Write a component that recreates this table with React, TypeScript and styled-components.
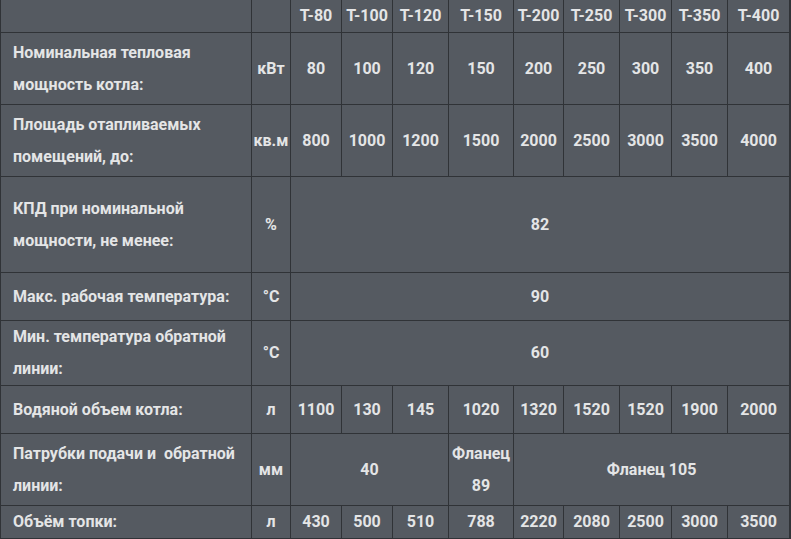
import React from "react";
import styled, { createGlobalStyle } from "styled-components";

const Global = createGlobalStyle`
  html, body {
    margin: 0;
    padding: 0;
    background: #303337;
  }
  body {
    font-family: Roboto, "Noto Sans", "Liberation Sans", sans-serif;
  }
`;

const Grid = styled.div`
  display: grid;
  width: 790px;
  box-sizing: border-box;
  padding: 0 1px 1px 1px;
  gap: 1px;
  background: #303337;
  grid-template-columns: 250px 38px 50px 50px 55px 64px 49px 55px 51px 55px 61px;
  grid-template-rows: 32px 71px 71px 95px 47px 64px 47px 71px 32px;
`;

const Cell = styled.div<{ $span?: number }>`
  background: #555a61;
  color: #e4e5e6;
  font-weight: 700;
  font-size: 16px;
  line-height: 32px;
  display: flex;
  align-items: center;
  justify-content: center;
  text-align: center;
  grid-column: span ${(p) => p.$span ?? 1};
  overflow: hidden;
  white-space: nowrap;
`;

const Label = styled(Cell)`
  justify-content: flex-start;
  text-align: left;
  padding-left: 12px;
`;

const models = ["T-80", "T-100", "T-120", "T-150", "T-200", "T-250", "T-300", "T-350", "T-400"];

type Row = {
  label: React.ReactNode;
  unit: string;
  values: { text: React.ReactNode; span?: number }[];
};

const rows: Row[] = [
  {
    label: (
      <>
        Номинальная тепловая
        <br />
        мощность котла:
      </>
    ),
    unit: "кВт",
    values: ["80", "100", "120", "150", "200", "250", "300", "350", "400"].map((t) => ({ text: t })),
  },
  {
    label: (
      <>
        Площадь отапливаемых
        <br />
        помещений, до:
      </>
    ),
    unit: "кв.м",
    values: ["800", "1000", "1200", "1500", "2000", "2500", "3000", "3500", "4000"].map((t) => ({ text: t })),
  },
  {
    label: (
      <>
        КПД при номинальной
        <br />
        мощности, не менее:
      </>
    ),
    unit: "%",
    values: [{ text: "82", span: 9 }],
  },
  {
    label: "Макс. рабочая температура:",
    unit: "°C",
    values: [{ text: "90", span: 9 }],
  },
  {
    label: (
      <>
        Мин. температура обратной
        <br />
        линии:
      </>
    ),
    unit: "°C",
    values: [{ text: "60", span: 9 }],
  },
  {
    label: "Водяной объем котла:",
    unit: "л",
    values: ["1100", "130", "145", "1020", "1320", "1520", "1520", "1900", "2000"].map((t) => ({ text: t })),
  },
  {
    label: (
      <>
        Патрубки подачи и&nbsp; обратной
        <br />
        линии:
      </>
    ),
    unit: "мм",
    values: [
      { text: "40", span: 3 },
      {
        text: (
          <>
            Фланец
            <br />
            89
          </>
        ),
      },
      { text: "Фланец 105", span: 5 },
    ],
  },
  {
    label: "Объём топки:",
    unit: "л",
    values: ["430", "500", "510", "788", "2220", "2080", "2500", "3000", "3500"].map((t) => ({ text: t })),
  },
];

export default function App() {
  return (
    <>
      <Global />
      <Grid>
        <Cell />
        <Cell />
        {models.map((m) => (
          <Cell key={m}>{m}</Cell>
        ))}
        {rows.map((r, i) => (
          <React.Fragment key={i}>
            <Label>
              <span>{r.label}</span>
            </Label>
            <Cell>{r.unit}</Cell>
            {r.values.map((v, j) => (
              <Cell key={j} $span={v.span}>
                <span>{v.text}</span>
              </Cell>
            ))}
          </React.Fragment>
        ))}
      </Grid>
    </>
  );
}
